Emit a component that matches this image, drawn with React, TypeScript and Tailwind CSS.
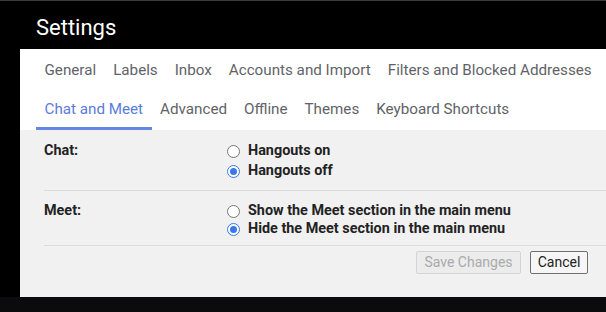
const topTabs = [
  "General",
  "Labels",
  "Inbox",
  "Accounts and Import",
  "Filters and Blocked Addresses",
  "Forwarding and POP/IMAP",
];

const subTabs = ["Chat and Meet", "Advanced", "Offline", "Themes", "Keyboard Shortcuts"];

function Radio({ checked }: { checked?: boolean }) {
  return (
    <span
      className={`w-[13px] h-[13px] rounded-full border flex items-center justify-center shrink-0 ${
        checked ? "border-[#3b78e7] bg-white" : "border-[#767676] bg-white"
      }`}
    >
      {checked && <span className="w-[7px] h-[7px] rounded-full bg-[#3b78e7]" />}
    </span>
  );
}

function Option({ label, checked }: { label: string; checked?: boolean }) {
  return (
    <label className="flex items-center gap-2">
      <Radio checked={checked} />
      <span>{label}</span>
    </label>
  );
}

export default function App() {
  return (
    <div className="w-[606px] h-[312px] bg-black overflow-hidden border-t border-[#3a3a3a] flex flex-col font-['Roboto',sans-serif]">
      {/* Header */}
      <div className="h-[48px] pl-9 flex items-center text-[22px] text-white leading-none pt-[6px]">
        Settings
      </div>

      {/* Panel */}
      <div className="ml-5 bg-white h-[248px] flex flex-col">
        <div className="pl-4">
          <div className="h-[40px] flex items-center whitespace-nowrap text-[15.2px] text-[#5f6368] pt-[2px]">
            {topTabs.map((t) => (
              <span key={t} className="px-[8.5px]">
                {t}
              </span>
            ))}
          </div>
          <div className="h-[41px] flex items-stretch whitespace-nowrap text-[15.2px] text-[#5f6368]">
            {subTabs.map((t, i) => (
              <span
                key={t}
                className={`px-[8.5px] flex items-center ${
                  i === 0 ? "text-[#5a7bdc] border-b-[3px] border-[#6586e2] pt-[3px]" : ""
                }`}
              >
                {t}
              </span>
            ))}
          </div>
        </div>

        <div className="flex-1 bg-[#f1f1f1] pl-6 text-[14.4px] text-[#222] font-bold">
          <div className="flex pt-[11px] pb-[9px] border-b border-[#dcdcdc]">
            <div className="w-[183px] leading-[20px]">Chat:</div>
            <div className="flex flex-col leading-[20px]">
              <Option label="Hangouts on" />
              <Option label="Hangouts off" checked />
            </div>
          </div>
          <div className="flex pt-[11px] pb-[7px] border-b border-[#dcdcdc]">
            <div className="w-[183px] leading-[18px]">Meet:</div>
            <div className="flex flex-col leading-[18px]">
              <Option label="Show the Meet section in the main menu" />
              <Option label="Hide the Meet section in the main menu" checked />
            </div>
          </div>
          <div className="flex justify-end gap-[9px] pt-[5px] pr-[18px] font-normal">
            <button className="h-[23px] w-[105px] border border-[#d4d4d4] bg-[#ececec] text-[#aaaaaa] rounded-[2px] text-[14px]">
              Save Changes
            </button>
            <button className="h-[23px] w-[58px] border border-[#707070] bg-[#f6f6f6] text-[#222] rounded-[2px] text-[14px]">
              Cancel
            </button>
          </div>
        </div>
      </div>
      <div className="flex-1 bg-[#0b0b0d]" />
    </div>
  );
}
